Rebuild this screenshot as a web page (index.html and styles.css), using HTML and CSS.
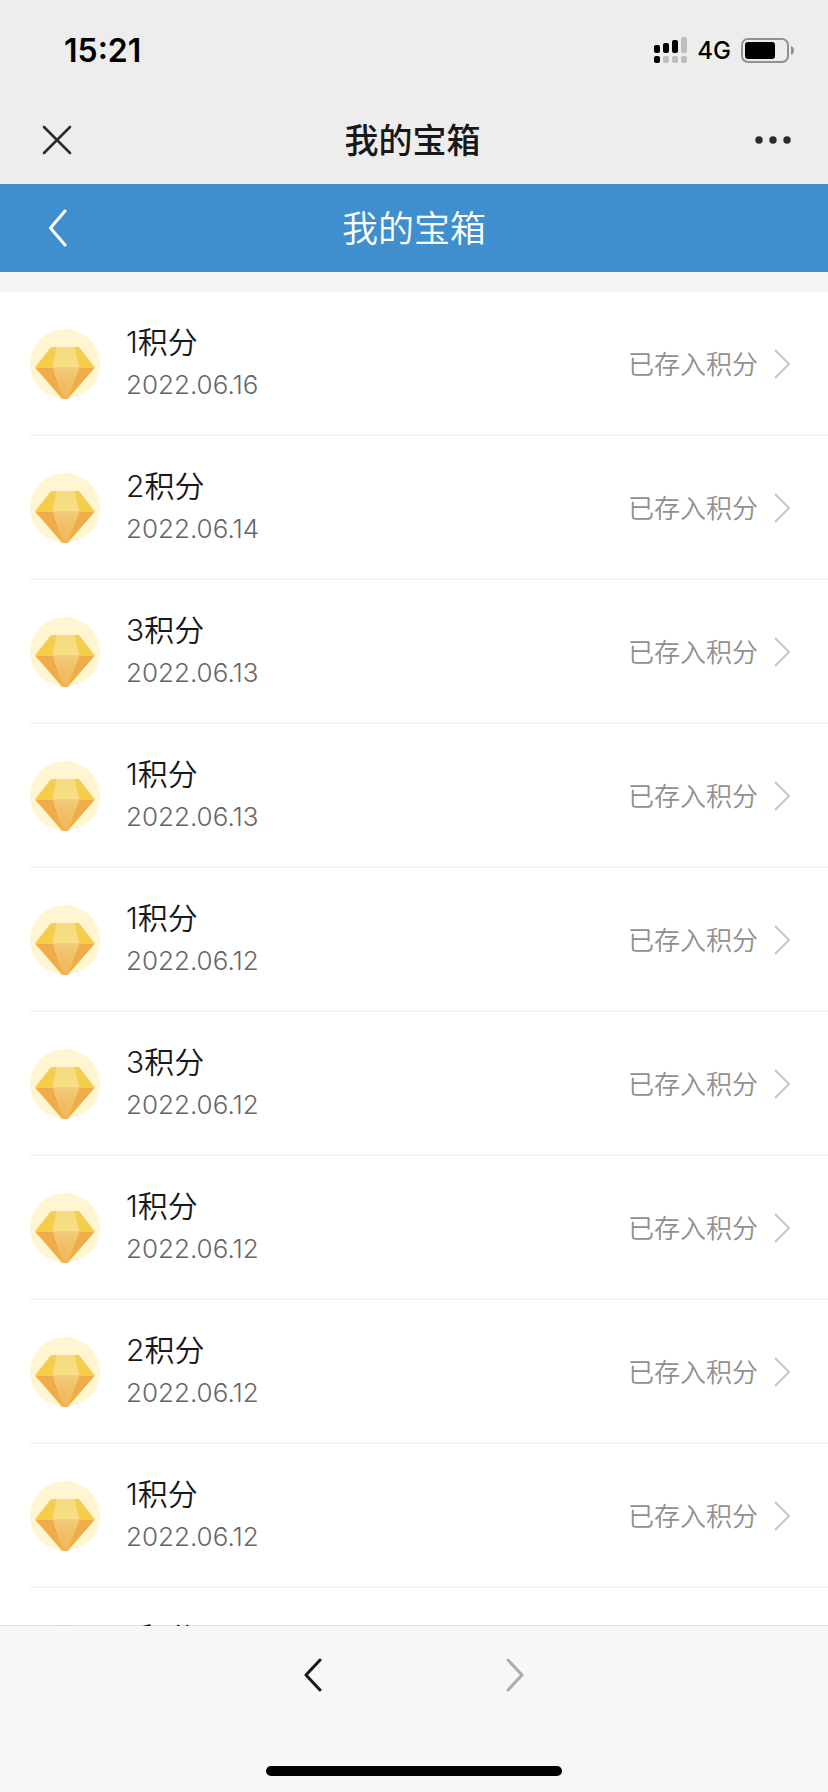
FILE: index.html
```html
<!DOCTYPE html>
<html lang="zh-CN">
<head>
<meta charset="utf-8">
<meta name="viewport" content="width=device-width, initial-scale=1">
<title>我的宝箱</title>
<link rel="stylesheet" href="styles.css">
</head>
<body>
<svg class="defs" aria-hidden="true">
  <defs>
    <linearGradient id="side-top" x1="0" y1="0" x2="0" y2="1"><stop offset="0" stop-color="#f1cd55"/><stop offset="1" stop-color="#f5ce45"/></linearGradient>
    <linearGradient id="mid-top" x1="0" y1="0" x2="0" y2="1"><stop offset="0" stop-color="#f5db7c"/><stop offset="1" stop-color="#f8e08a"/></linearGradient>
    <linearGradient id="side-low" x1="0" y1="0" x2="0" y2="1"><stop offset="0" stop-color="#f0ac4b"/><stop offset="1" stop-color="#eeae42"/></linearGradient>
    <linearGradient id="mid-low" x1="0" y1="0" x2="0" y2="1"><stop offset="0" stop-color="#f1cb78"/><stop offset="1" stop-color="#efb452"/></linearGradient>
    <symbol id="gem" viewBox="0 0 70 70">
      <circle cx="35" cy="35" r="35" fill="#fdf6d0"/>
      <path d="M21 18H49L65 38.500H5Z" fill="url(#side-top)"/>
      <path d="M5 38.500H65L38.500 69Q37.500 70 36 70H34Q32.500 70 31.500 69Z" fill="url(#side-low)"/>
      <path d="M26.500 18H44.500L49.500 38.500H22.500Z" fill="url(#mid-top)"/>
      <path d="M22.500 38.500H49.500L38 69.500L36 70H34L32.500 69.500Z" fill="url(#mid-low)"/>
    </symbol>
    <symbol id="more" viewBox="0 0 16 30"><path d="M1 1L15 15L1 29" fill="none" stroke="#c8c8c8" stroke-width="2"/></symbol>
  </defs>
</svg>
<header>
  <div class="status">
    <time class="clock">15:21</time>
    <div class="signals">
      <svg width="33" height="26" viewBox="0 0 33 26" role="img" aria-label="信号">
        <g fill="#000"><rect y="8" width="6" height="8" rx="2"/><rect x="9" y="6" width="6" height="10" rx="2"/><rect x="18" y="3" width="6" height="13" rx="2"/><rect y="19" width="6" height="7" rx="2"/></g>
        <g fill="#bdbdbd"><rect x="27" width="6" height="16" rx="2"/><rect x="9" y="19" width="6" height="7" rx="2"/><rect x="18" y="19" width="6" height="7" rx="2"/><rect x="27" y="19" width="6" height="7" rx="2"/></g>
      </svg>
      <span class="network">4G</span>
      <svg width="53" height="25" viewBox="0 0 53 25" role="img" aria-label="电量">
        <rect x="1" y="1" width="46" height="23" rx="6" fill="none" stroke="#919191" stroke-width="2"/>
        <rect x="4" y="4" width="30" height="17" rx="3"/>
        <path d="M50 8Q53 9 53 12.500T50 17Z" fill="#919191"/>
      </svg>
    </div>
  </div>
  <div class="bar">
    <button class="icon-btn close" aria-label="关闭"><svg width="30" height="30" viewBox="0 0 30 30"><path d="M2 2L28 28M28 2L2 28" fill="none" stroke="#2b2b2b" stroke-width="2.600" stroke-linecap="round"/></svg></button>
    <h1 class="bar-title">我的宝箱</h1>
    <button class="icon-btn end" aria-label="更多"><svg width="36" height="8" viewBox="0 0 36 8" fill="#2b2b2b"><circle cx="4" cy="4" r="3.700"/><circle cx="18" cy="4" r="3.700"/><circle cx="32" cy="4" r="3.700"/></svg></button>
  </div>
  <div class="bar page-bar">
    <button class="icon-btn" aria-label="返回"><svg width="19" height="38" viewBox="0 0 19 38"><path d="M17 2L2.500 19L17 36" fill="none" stroke="#fff" stroke-width="3" stroke-linecap="round" stroke-linejoin="round"/></svg></button>
    <h2 class="bar-title page-title">我的宝箱</h2>
    <span></span>
  </div>
</header>
<main>
  <ul class="list">
    <li><a class="row" href="#"><svg class="gem"><use href="#gem"/></svg><span class="info"><span class="points">1积分</span><time class="date">2022.06.16</time></span><span class="state">已存入积分</span><svg class="more"><use href="#more"/></svg></a></li>
    <li><a class="row" href="#"><svg class="gem"><use href="#gem"/></svg><span class="info"><span class="points">2积分</span><time class="date">2022.06.14</time></span><span class="state">已存入积分</span><svg class="more"><use href="#more"/></svg></a></li>
    <li><a class="row" href="#"><svg class="gem"><use href="#gem"/></svg><span class="info"><span class="points">3积分</span><time class="date">2022.06.13</time></span><span class="state">已存入积分</span><svg class="more"><use href="#more"/></svg></a></li>
    <li><a class="row" href="#"><svg class="gem"><use href="#gem"/></svg><span class="info"><span class="points">1积分</span><time class="date">2022.06.13</time></span><span class="state">已存入积分</span><svg class="more"><use href="#more"/></svg></a></li>
    <li><a class="row" href="#"><svg class="gem"><use href="#gem"/></svg><span class="info"><span class="points">1积分</span><time class="date">2022.06.12</time></span><span class="state">已存入积分</span><svg class="more"><use href="#more"/></svg></a></li>
    <li><a class="row" href="#"><svg class="gem"><use href="#gem"/></svg><span class="info"><span class="points">3积分</span><time class="date">2022.06.12</time></span><span class="state">已存入积分</span><svg class="more"><use href="#more"/></svg></a></li>
    <li><a class="row" href="#"><svg class="gem"><use href="#gem"/></svg><span class="info"><span class="points">1积分</span><time class="date">2022.06.12</time></span><span class="state">已存入积分</span><svg class="more"><use href="#more"/></svg></a></li>
    <li><a class="row" href="#"><svg class="gem"><use href="#gem"/></svg><span class="info"><span class="points">2积分</span><time class="date">2022.06.12</time></span><span class="state">已存入积分</span><svg class="more"><use href="#more"/></svg></a></li>
    <li><a class="row" href="#"><svg class="gem"><use href="#gem"/></svg><span class="info"><span class="points">1积分</span><time class="date">2022.06.12</time></span><span class="state">已存入积分</span><svg class="more"><use href="#more"/></svg></a></li>
    <li><a class="row" href="#"><svg class="gem"><use href="#gem"/></svg><span class="info"><span class="points">1积分</span></span></a></li>
  </ul>
</main>
<footer>
  <nav class="history">
    <button class="icon-btn" aria-label="后退"><svg width="18" height="34" viewBox="0 0 18 34"><path d="M16 2L2 17L16 32" fill="none" stroke="#181818" stroke-width="3" stroke-linecap="round" stroke-linejoin="round"/></svg></button>
    <button class="icon-btn" aria-label="前进" disabled><svg width="18" height="34" viewBox="0 0 18 34"><path d="M2 2L16 17L2 32" fill="none" stroke="#acacac" stroke-width="3" stroke-linecap="round" stroke-linejoin="round"/></svg></button>
  </nav>
  <div class="home"></div>
</footer>
</body>
</html>
```

FILE: styles.css
```css
* { box-sizing: border-box; }

body {
  display: flex;
  flex-direction: column;
  height: 100vh;
  margin: 0;
  overflow: hidden;
  background: #fff;
  color: #181818;
  font-family: Inter, "Noto Sans CJK SC", sans-serif;
  font-weight: 350;
}

.defs { position: absolute; width: 0; height: 0; }

header { flex: none; background: #ededed; }

.status {
  display: flex;
  align-items: center;
  justify-content: space-between;
  height: 96px;
  padding: 4px 34px 0 64px;
  color: #000;
}

.clock { font-size: 32px; font-weight: 600; }

.signals { display: flex; align-items: center; gap: 10px; }

.network { font-size: 24px; font-weight: 500; }

.bar {
  display: grid;
  grid-template-columns: 1fr auto 1fr;
  align-items: center;
  height: 88px;
  padding: 0 37px 0 34px;
}

.bar-title {
  margin: 0;
  padding-top: 1px;
  font-size: 34px;
  font-weight: 500;
  line-height: 48px;
}

.page-bar { padding: 0 48px; background: #3f8fce; }

.page-title { color: #fff; font-size: 36px; font-weight: 350; }

.icon-btn {
  display: flex;
  justify-self: start;
  padding: 0;
  border: 0;
  background: none;
}

.close { margin-left: 8px; }

.end { justify-self: end; }

main {
  flex: 1;
  min-height: 0;
  overflow: hidden;
  border-top: 20px solid #f3f4f6;
}

.list { margin: 0; padding: 0 0 0 30px; list-style: none; }

.row {
  display: flex;
  align-items: center;
  height: 144px;
  padding: 2px 38px 0 0;
  border-bottom: 2px solid #f3f4f5;
  color: inherit;
  text-decoration: none;
}

.gem { flex: none; width: 70px; height: 70px; }

.info {
  display: flex;
  flex: 1;
  flex-direction: column;
  height: 88px;
  margin-left: 26px;
}

.points { font-size: 30px; line-height: 44px; }

.date { color: #666; font-size: 26px; line-height: 42px; }

.state { padding-top: 2px; color: #909090; font-size: 26px; line-height: 38px; }

.more { width: 16px; height: 30px; margin-left: 16px; }

footer {
  position: relative;
  flex: none;
  margin-top: -1px;
  padding-bottom: 16px;
  border-top: 1px solid rgba(0, 0, 0, 0.12);
  background: #f7f7f7;
  background-clip: padding-box;
}

.history {
  display: flex;
  align-items: center;
  justify-content: center;
  gap: 184px;
  height: 98px;
}

.home {
  width: 296px;
  height: 10px;
  margin: 42px auto 0;
  border-radius: 5px;
  background: #000;
}
```
